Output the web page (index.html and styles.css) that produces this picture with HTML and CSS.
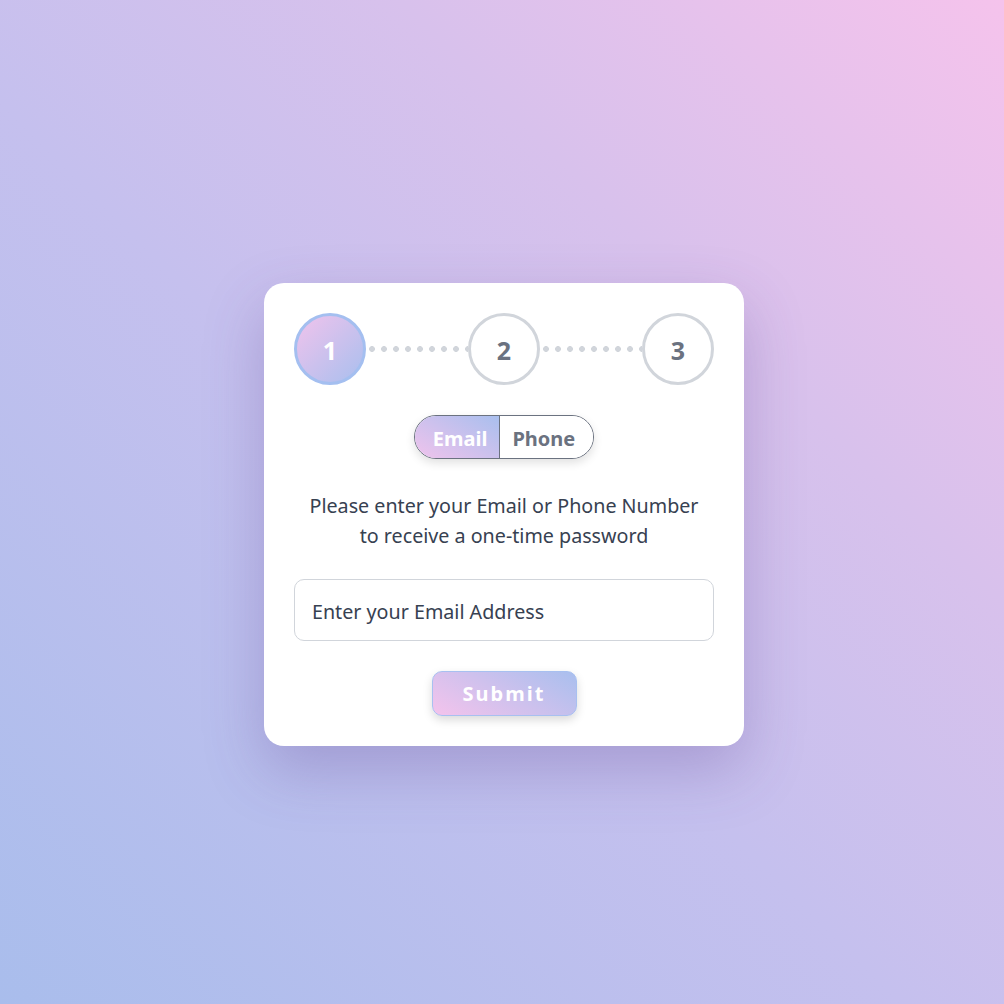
FILE: index.html
```html
<!DOCTYPE html>
<html lang="en">
<head>
<meta charset="utf-8">
<title>OTP</title>
<link rel="stylesheet" href="styles.css">
</head>
<body>
<main class="page">
  <section class="card">
    <div class="steps">
      <div class="step active">1</div>
      <div class="dots"></div>
      <div class="step">2</div>
      <div class="dots"></div>
      <div class="step">3</div>
    </div>
    <div class="toggle">
      <button class="tab on">Email</button>
      <button class="tab">Phone</button>
    </div>
    <p class="msg">Please enter your Email or Phone Number<br>to receive a one-time password</p>
    <input class="field" type="text" placeholder="Enter your Email Address">
    <button class="submit">Submit</button>
  </section>
</main>
</body>
</html>
```
FILE: styles.css
```css
* { box-sizing: border-box; }
html, body { margin: 0; height: 100%; }
body {
  font-family: "Noto Sans", "Open Sans", sans-serif;
  background: linear-gradient(45deg, #a9bdec 0%, #c5c0ee 45%, #d8c1ec 70%, #f5c3ec 100%);
}
.page {
  min-height: 100vh;
  display: flex;
  align-items: center;
  justify-content: center;
  padding: 24px 0 0 4px;
}
.card {
  width: 480px;
  background: #fff;
  border-radius: 20px;
  padding: 30px;
  display: flex;
  flex-direction: column;
  align-items: center;
  box-shadow: 0 24px 60px rgba(90, 60, 140, 0.28);
}
.steps {
  width: 100%;
  display: flex;
  align-items: center;
}
.step {
  width: 72px;
  height: 72px;
  flex: none;
  border-radius: 50%;
  border: 3px solid #d1d5db;
  display: flex;
  align-items: center;
  justify-content: center;
  font-size: 25px;
  font-weight: 700;
  color: #6b7280;
  padding-top: 2px;
}
.step.active {
  border-color: #a4bff0;
  color: #fff;
  background: linear-gradient(135deg, #f0c3ec 0%, #a9bfee 100%);
}
.dots {
  flex: 1;
  height: 8px;
  background: radial-gradient(circle, #d1d5db 2.6px, transparent 3.2px) 0 center / 12px 8px repeat-x;
}
.toggle {
  margin-top: 30px;
  display: flex;
  border: 1px solid #6b7280;
  border-radius: 22px;
  overflow: hidden;
  box-shadow: 0 4px 10px rgba(0, 0, 0, 0.12);
}
.tab {
  font-family: inherit;
  font-size: 20px;
  font-weight: 700;
  height: 42px;
  border: 0;
  margin: 0;
  background: #fff;
  color: #6b7280;
  padding: 3px 18px 0 12px;
}
.tab.on {
  color: #fff;
  padding: 3px 12px 0 18px;
  border-right: 1px solid #6b7280;
  background: linear-gradient(30deg, #f0c3ec 0%, #a9bfee 100%);
}
.msg {
  margin: 32px 0 0;
  text-align: center;
  font-size: 19.7px;
  line-height: 30px;
  color: #374151;
}
.field {
  margin-top: 28px;
  width: 100%;
  height: 62px;
  border: 1px solid #d1d5db;
  border-radius: 10px;
  padding: 3px 17px 0;
  font-family: inherit;
  font-size: 19.7px;
  color: #374151;
  outline: none;
}
.field::placeholder { color: #374151; opacity: 1; }
.submit {
  margin-top: 30px;
  width: 145px;
  height: 45px;
  border: 1px solid #a8c0f0;
  border-radius: 10px;
  background: linear-gradient(30deg, #f4c3ec 0%, #a9bfee 100%);
  color: #fff;
  font-family: inherit;
  font-size: 20px;
  font-weight: 700;
  letter-spacing: 2px;
  padding-top: 2px;
  box-shadow: 0 4px 10px rgba(0, 0, 0, 0.15);
}
```
